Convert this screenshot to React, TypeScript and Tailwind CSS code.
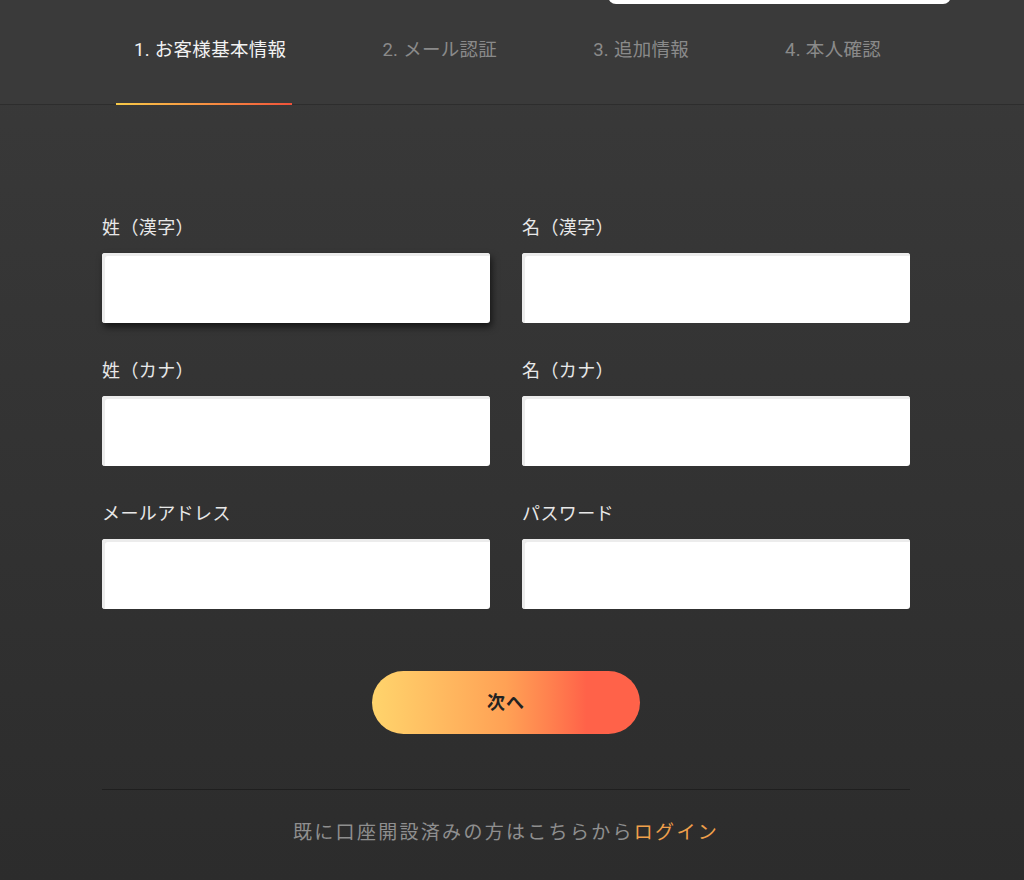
const font = { fontFamily: '"Roboto", "Noto Sans CJK JP", sans-serif' };

const tabs = ["1. お客様基本情報", "2. メール認証", "3. 追加情報", "4. 本人確認"];

const fields = [
    { label: "姓（漢字）", type: "text", focus: true },
    { label: "名（漢字）", type: "text" },
    { label: "姓（カナ）", type: "text" },
    { label: "名（カナ）", type: "text" },
    { label: "メールアドレス", type: "email" },
    { label: "パスワード", type: "password" },
];

const Field = ({ label, type, focus }: { label: string; type: string; focus?: boolean }) => {
    return (
        <div className="flex flex-col">
            <label className="text-[18px] leading-[24px] tracking-[0.4px] text-[#e8e8e8] mb-[13px]">{label}</label>
            <input
                type={type}
                className={`h-[70px] w-full rounded-[3px] bg-white outline-none ${focus ? "shadow-[inset_3px_3px_0_#ececec,2px_4px_7px_rgba(0,0,0,0.6)]" : "shadow-[inset_3px_3px_0_#ececec]"}`}
            />
        </div>
    );
};

const App = () => {
    return (
        <div style={font} className="w-[1024px] h-[880px] overflow-hidden bg-gradient-to-b from-[#3a3a3a] to-[#2c2c2c]">
            {/* header tabs */}
            <div className="relative h-[105px] bg-[#3a3a3a] border-b border-[#2d2d2d]">
                <div className="absolute left-[608px] top-[-20px] w-[343px] h-[24px] rounded-[8px] bg-white"></div>
                <div className="flex pl-[116px] gap-[72px] h-full">
                    {tabs.map((t, i) => (
                        <div key={t} className="relative flex items-start pt-[37px] pl-[18px] pr-[6px]">
                            <span className={`text-[18.5px] leading-[26px] tracking-[0.3px] ${i === 0 ? "text-[#f2f2f2]" : "text-[#8a8a8a]"}`}>{t}</span>
                            {i === 0 && (
                                <div className="absolute left-0 right-0 bottom-[-1px] h-[2px] bg-gradient-to-r from-[#f7c948] to-[#f0513a]"></div>
                            )}
                        </div>
                    ))}
                </div>
            </div>

            {/* form */}
            <div className="px-[102px] pt-[111px]">
                <div className="grid grid-cols-2 gap-x-[32px] gap-y-[36px] pr-[12px]">
                    {fields.map((f) => (
                        <Field key={f.label} label={f.label} type={f.type} focus={f.focus} />
                    ))}
                </div>

                <div className="flex justify-center mt-[62px] pr-[12px]">
                    <button className="w-[268px] h-[63px] rounded-full bg-gradient-to-r from-[#ffd46c] via-[#ffa155] via-50% to-[#ff6249] to-80% text-[18px] tracking-[1px] font-bold text-[#222]">
                        次へ
                    </button>
                </div>

                <div className="mt-[55px] mr-[12px] border-t border-[#1f1f1f]"></div>

                <p className="mt-[29px] pr-[12px] text-center text-[19px] leading-[28px] tracking-[2.3px] text-[#8f8f8f]">
                    既に口座開設済みの方はこちらから<a href="#" className="text-[#f0a04b]">ログイン</a>
                </p>
            </div>
        </div>
    );
};

export default App;
